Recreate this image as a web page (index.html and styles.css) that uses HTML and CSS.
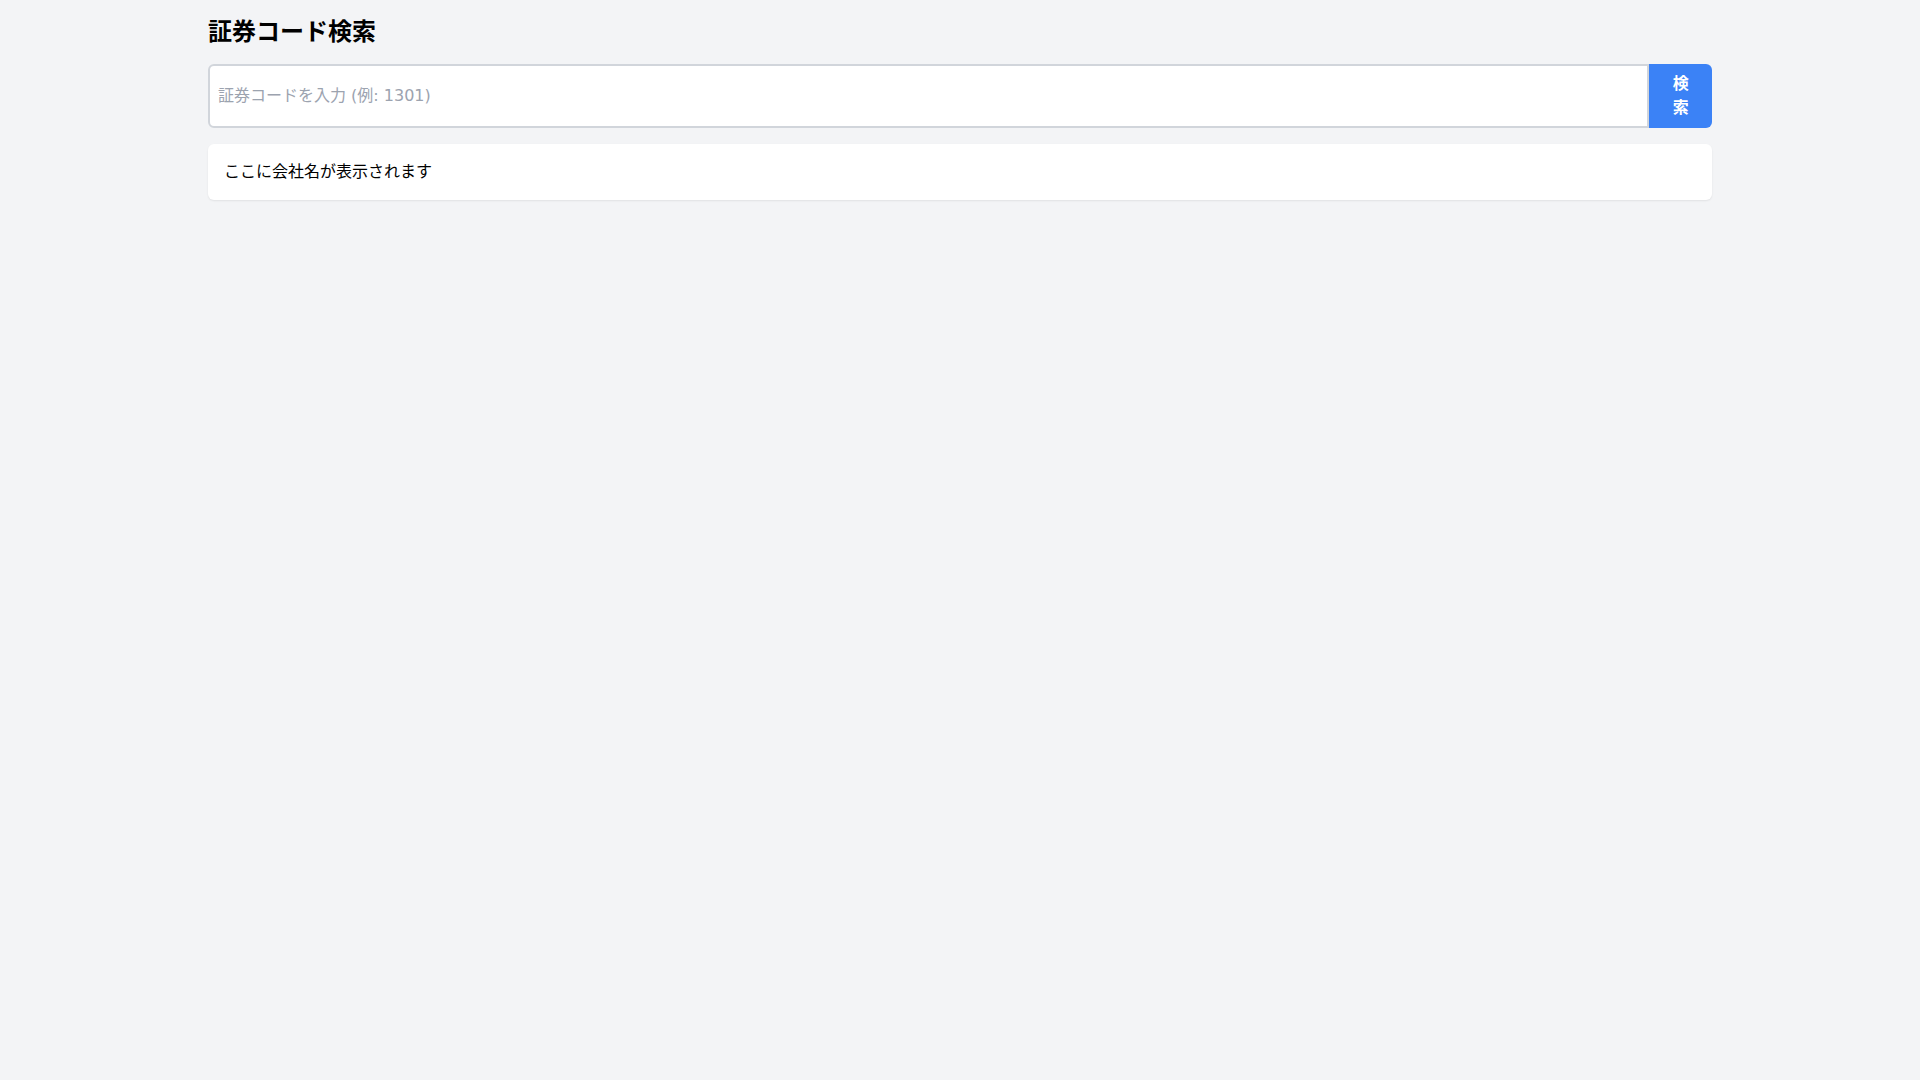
FILE: index.html
```html
<!DOCTYPE html>
<html lang="ja">
<head>
    <meta charset="UTF-8">
    <meta name="viewport" content="width=device-width, initial-scale=1.0">
    <title>証券コード検索</title>
    <link rel="stylesheet" href="styles.css">
</head>
<body>

    <div class="container">
        <h1 class="title">証券コード検索</h1>

        <div class="search-row">
            <input type="text" class="code-input" placeholder="証券コードを入力 (例: 1301)">
            <button class="search-btn">検索</button>
        </div>

        <div class="result">ここに会社名が表示されます</div>
    </div>

</body>
</html>
```

FILE: styles.css
```css
* {
    box-sizing: border-box;
    margin: 0;
    padding: 0;
}

body {
    background: #f3f4f6;
    font-family: "DejaVu Sans", "Noto Sans CJK JP", sans-serif;
    font-size: 16px;
    line-height: 24px;
    color: #000;
}

.container {
    max-width: 1536px;
    margin: 0 auto;
    padding: 16px;
}

.title {
    font-size: 24px;
    line-height: 32px;
    font-weight: bold;
    margin-bottom: 16px;
}

/* Search bar */
.search-row {
    display: flex;
}

/* full width input squeezes the button, so its label wraps */
.code-input {
    width: 100%;
    padding: 8px;
    border: 2px solid #d1d5db;
    border-radius: 6px 0 0 6px;
    font-family: inherit;
    font-size: 16px;
    line-height: 24px;
    background: #fff;
    outline: none;
}

.code-input::placeholder {
    color: #9ca3af;
}

.search-btn {
    background: #3b82f6;
    color: #fff;
    border: none;
    padding: 8px 16px;
    font-family: inherit;
    font-size: 16px;
    line-height: 24px;
    font-weight: bold;
    border-radius: 0 6px 6px 0;
    cursor: pointer;
}

.search-btn:hover {
    background: #2563eb;
}

/* Result box */
.result {
    margin-top: 16px;
    padding: 16px;
    background: #fff;
    border-radius: 6px;
    box-shadow: 0 1px 2px rgba(0, 0, 0, 0.08);
}
```
